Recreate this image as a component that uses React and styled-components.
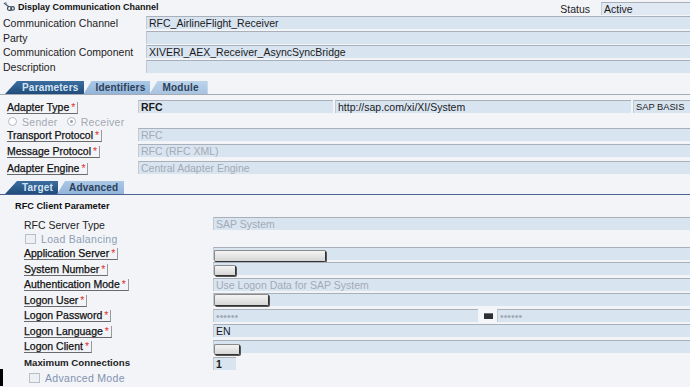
import styled, { createGlobalStyle } from "styled-components";

const GlobalStyle = createGlobalStyle`
  html, body {
    margin: 0;
    padding: 0;
    background: #f3f4f8;
    font-family: "Liberation Sans", Arial, sans-serif;
    color: #1c1c1c;
  }
`;

const Page = styled.div`
  width: 690px;
  height: 387px;
  overflow: hidden;
  display: flex;
  flex-direction: column;
  font-size: 10.5px;
`;

const Header = styled.div`
  height: 16px;
  display: flex;
  align-items: flex-start;
  justify-content: space-between;
  .title {
    display: flex;
    align-items: center;
    gap: 3px;
    padding: 2px 0 0 3px;
    font-size: 9px;
    font-weight: 700;
    color: #111;
  }
  .status {
    display: flex;
    align-items: center;
    padding-top: 2px;
    span {
      margin-right: 11px;
      color: #222;
    }
  }
`;

const Row = styled.div`
  display: grid;
  grid-template-columns: ${(p) => p.$label}px 1fr;
  height: ${(p) => p.$h}px;
  align-items: start;
  padding-left: ${(p) => p.$pl || 0}px;
`;

const Label = styled.div`
  align-self: center;
  white-space: nowrap;
  color: #222;
  font-weight: ${(p) => (p.$bold ? 700 : 400)};
  font-size: ${(p) => (p.$bold ? "9.7px" : "inherit")};
`;

const ReqLabel = styled.div`
  align-self: center;
  justify-self: start;
  white-space: nowrap;
  color: #111;
  -webkit-text-stroke: 0.25px #111;
  line-height: 11px;
  padding-right: 2px;
  border-bottom: 1px solid #6a6a6a;
  border-right: 1px solid #9a9a9a;
  b {
    color: #e0302c;
    font-weight: 400;
    -webkit-text-stroke: 0;
    margin-left: 2px;
  }
`;

const Fields = styled.div`
  display: flex;
  gap: ${(p) => p.$gap || 0}px;
`;

const Field = styled.div`
  flex: ${(p) => (p.$w ? `0 0 ${p.$w}px` : "1")};
  height: ${(p) => p.$h || 13}px;
  box-sizing: border-box;
  display: flex;
  align-items: flex-start;
  padding-left: 2px;
  line-height: 12px;
  white-space: nowrap;
  overflow: visible;
  background: ${(p) => (p.$light ? "#dfe8f3" : "#d9e4f1")};
  border-top: 1px solid #a9b0b9;
  border-left: 1px solid #c3c9d0;
  color: ${(p) => (p.$off ? "#a2aab5" : "#1a1a1a")};
  font-weight: ${(p) => (p.$bold ? 700 : 400)};
  font-size: ${(p) => p.$fs || "inherit"};
`;

const Mask = styled.div`
  flex: 0 0 ${(p) => p.$w}px;
  height: ${(p) => p.$h || 11}px;
  margin-top: ${(p) => p.$top || 0}px;
  margin-left: -2px;
  box-sizing: border-box;
  background: linear-gradient(#f4f4f4, #d6d6d6);
  border: 1px solid #8a8a8a;
  border-right-color: #333;
  border-bottom-color: #333;
  border-radius: 2px;
  box-shadow: 1px 1px 0 #555;
`;

const TabStrip = styled.div`
  display: flex;
  align-items: flex-end;
  gap: 1px;
  height: 13px;
  padding-left: 5px;
  border-bottom: 1px solid ${(p) => p.$line};
  margin-top: ${(p) => p.$mt}px;
`;

const Tab = styled.div`
  height: 13px;
  display: flex;
  align-items: center;
  box-sizing: border-box;
  padding: 0 ${(p) => p.$pr}px 0 ${(p) => p.$pl}px;
  font-size: 10px;
  font-weight: 700;
  letter-spacing: 0.2px;
  white-space: nowrap;
  clip-path: polygon(${(p) => (p.$active ? 12 : 8)}px 0, 100% 0, 100% 100%, 0 100%);
  margin-left: ${(p) => (p.$active ? 0 : -2)}px;
  background: ${(p) =>
    p.$active
      ? "linear-gradient(#3b6e9f, #1f4c7b)"
      : p.$pale
      ? "linear-gradient(#bcd3ea, #a8c3e0)"
      : "linear-gradient(#aac8e6, #93b5da)"};
  color: ${(p) => (p.$active ? "#d4e4f3" : "#2b405a")};
`;

const Section = styled.div`
  display: flex;
  flex-direction: column;
  padding-top: ${(p) => p.$pt || 0}px;
`;

const OptionRow = styled.div`
  display: flex;
  align-items: center;
  height: ${(p) => p.$h}px;
  padding-left: ${(p) => p.$pl}px;
  gap: 5px;
  color: ${(p) => p.$color};
  letter-spacing: 0.3px;
`;

const Radio = styled.span`
  width: 7px;
  height: 7px;
  border-radius: 50%;
  border: 1px solid #b3bac3;
  background: #fff;
  display: inline-flex;
  align-items: center;
  justify-content: center;
  margin-left: ${(p) => p.$ml || 0}px;
  &::after {
    content: "";
    width: 3px;
    height: 3px;
    border-radius: 50%;
    background: ${(p) => (p.$on ? "#9aa2ad" : "transparent")};
  }
`;

const Check = styled.span`
  width: 9px;
  height: 8px;
  border: 1px solid #b9bfc7;
  background: #eef0f3;
`;

const GroupTitle = styled.div`
  height: 22px;
  display: flex;
  align-items: center;
  padding-left: 15px;
  font-size: 9.2px;
  font-weight: 700;
  color: #111;
`;

const PwKey = styled.div`
  flex: 0 0 18px;
  height: 14px;
  margin-left: 1px;
  background: #f4f6f9;
  display: flex;
  align-items: center;
  justify-content: center;
  &::after {
    content: "";
    width: 9px;
    height: 5px;
    background: #2c2f33;
    border-top: 1px solid #6b6f74;
  }
`;

const Edge = styled.span`
  width: 3px;
  height: 17px;
  align-self: flex-end;
  background: #000;
  margin-right: 21px;
`;

function DisplayIcon() {
  return (
    <svg width="12" height="10" viewBox="0 0 12 10">
      <path d="M1 1 L6 5" stroke="#4b5a6c" strokeWidth="1.3" />
      <circle cx="6.5" cy="6.5" r="2" fill="none" stroke="#3d4b5c" strokeWidth="1.2" />
      <circle cx="9.6" cy="6.4" r="1.8" fill="none" stroke="#3d4b5c" strokeWidth="1.2" />
      <path d="M2 0.5 L4 1.5" stroke="#7b8796" strokeWidth="1" />
    </svg>
  );
}

function Req({ children }) {
  return (
    <ReqLabel>
      {children}
      <b>*</b>
    </ReqLabel>
  );
}

const top = [
  ["Communication Channel", "RFC_AirlineFlight_Receiver"],
  ["Party", ""],
  ["Communication Component", "XIVERI_AEX_Receiver_AsyncSyncBridge"],
  ["Description", ""],
];

export default function App() {
  return (
    <>
      <GlobalStyle />
      <Page>
        <Header>
          <div className="title">
            <DisplayIcon />
            Display Communication Channel
          </div>
          <div className="status">
            <span>Status</span>
            <Field $w={89} $light>
              Active
            </Field>
          </div>
        </Header>

        {top.map(([label, value]) => (
          <Row key={label} $label={146} $h={14.5} $pl={0}>
            <Label style={{ paddingLeft: 3 }}>{label}</Label>
            <Field>{value}</Field>
          </Row>
        ))}

        <TabStrip $line="#a4abb5" $mt={7}>
          <Tab $active $pl={17} $pr={6}>
            Parameters
          </Tab>
          <Tab $pl={12} $pr={5}>
            Identifiers
          </Tab>
          <Tab $pl={13} $pr={9} $pale>
            Module
          </Tab>
        </TabStrip>

        <Section $pt={4.5}>
          <Row $label={131} $h={16.5} $pl={7}>
            <Req>Adapter Type</Req>
            <Fields $gap={2}>
              <Field $w={195} $bold>
                RFC
              </Field>
              <Field $w={296}>http://sap.com/xi/XI/System</Field>
              <Field $fs="9.3px">SAP BASIS</Field>
            </Fields>
          </Row>
          <OptionRow $h={11.5} $pl={8} $color="#a3a9b1">
            <Radio />
            Sender
            <Radio $on $ml={4} />
            Receiver
          </OptionRow>
          <Row $label={131} $h={16.5} $pl={7}>
            <Req>Transport Protocol</Req>
            <Field $off>RFC</Field>
          </Row>
          <Row $label={131} $h={16.5} $pl={7}>
            <Req>Message Protocol</Req>
            <Field $off>RFC (RFC XML)</Field>
          </Row>
          <Row $label={131} $h={16.5} $pl={7}>
            <Req>Adapter Engine</Req>
            <Field $off>Central Adapter Engine</Field>
          </Row>
        </Section>

        <TabStrip $line="#4a5f92" $mt={4}>
          <Tab $active $pl={17} $pr={5}>
            Target
          </Tab>
          <Tab $pl={12} $pr={6}>
            Advanced
          </Tab>
        </TabStrip>

        <Section>
          <GroupTitle>RFC Client Parameter</GroupTitle>
          <Row $label={189} $h={15} $pl={24}>
            <Label>RFC Server Type</Label>
            <Field $off>SAP System</Field>
          </Row>
          <OptionRow $h={14.5} $pl={25} $color="#8d9db3">
            <Check />
            Load Balancing
          </OptionRow>
          <Row $label={189} $h={15.5} $pl={24}>
            <Req>Application Server</Req>
            <Field>
              <Mask $w={112} $h={12} $top={2} />
            </Field>
          </Row>
          <Row $label={189} $h={15.5} $pl={24}>
            <Req>System Number</Req>
            <Field>
              <Mask $w={22} $h={11} $top={2} />
            </Field>
          </Row>
          <Row $label={189} $h={15.5} $pl={24}>
            <Req>Authentication Mode</Req>
            <Field $off>Use Logon Data for SAP System</Field>
          </Row>
          <Row $label={189} $h={15.5} $pl={24}>
            <Req>Logon User</Req>
            <Field>
              <Mask $w={55} $h={12} $top={0} />
            </Field>
          </Row>
          <Row $label={189} $h={15.5} $pl={24}>
            <Req>Logon Password</Req>
            <Fields>
              <Field $w={265} $off>
                ••••••
              </Field>
              <PwKey />
              <Field $off>••••••</Field>
            </Fields>
          </Row>
          <Row $label={189} $h={15.5} $pl={24}>
            <Req>Logon Language</Req>
            <Field>EN</Field>
          </Row>
          <Row $label={189} $h={15.5} $pl={24}>
            <Req>Logon Client</Req>
            <Field>
              <Mask $w={26} $h={11} $top={3} />
            </Field>
          </Row>
          <Row $label={189} $h={15.5} $pl={24}>
            <Label $bold>Maximum Connections</Label>
            <Fields>
              <Field $w={23} $bold style={{ marginTop: 2 }}>
                1
              </Field>
            </Fields>
          </Row>
          <OptionRow $h={15.5} $pl={0} $color="#7f93b1">
            <Edge />
            <Check />
            Advanced Mode
          </OptionRow>
        </Section>
      </Page>
    </>
  );
}
